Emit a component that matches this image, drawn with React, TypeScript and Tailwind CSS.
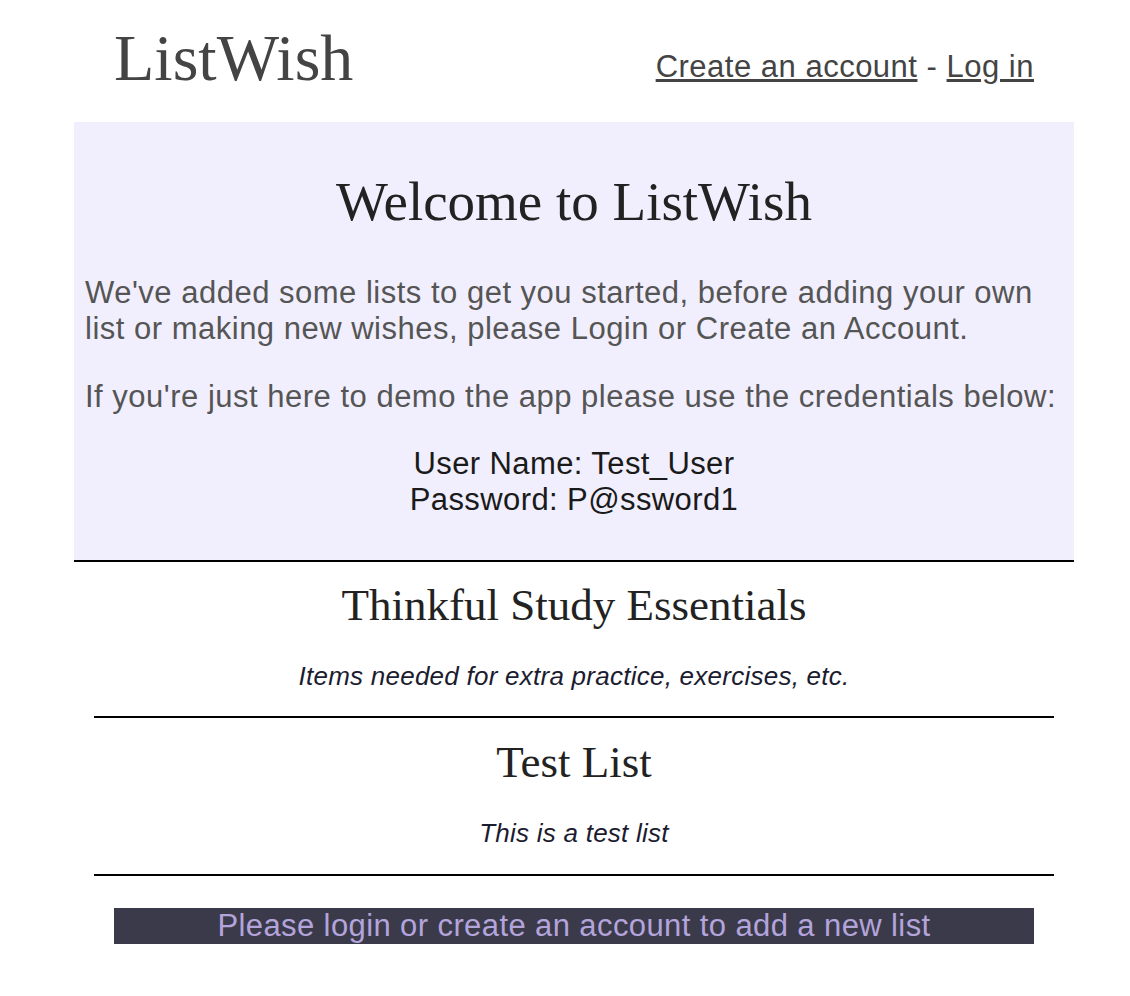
export default function App() {
  return (
    <div className="min-h-screen bg-white font-['Liberation_Sans',Arial,sans-serif]">
      <div className="ml-[74px] w-[1000px]">
        {/* Header */}
        <header className="flex h-[122px] items-start justify-between px-[40px]">
          <h1 className="mt-[20px] font-['Liberation_Serif',serif] text-[66px] leading-[76px] text-[#444]">
            ListWish
          </h1>
          <nav className="mt-[49px] text-[31px] leading-[36px] tracking-[0.5px] text-[#444]">
            <a href="#" className="underline">Create an account</a>
            <span> - </span>
            <a href="#" className="underline">Log in</a>
          </nav>
        </header>

        {/* Welcome panel */}
        <section className="border-b-2 border-black bg-[#f1effd] px-[11px] pt-[50px] pb-[42px]">
          <h2 className="text-center font-['Liberation_Serif',serif] text-[55px] leading-[60px] text-[#222]">
            Welcome to ListWish
          </h2>
          <p className="mt-[43px] text-[31px] leading-[36px] tracking-[0.5px] text-[#555]">
            We've added some lists to get you started, before adding your own list or making new wishes, please Login or Create an Account.
          </p>
          <p className="mt-[32px] text-[31px] leading-[36px] tracking-[0.5px] text-[#555]">
            If you're just here to demo the app please use the credentials below:
          </p>
          <div className="mt-[31px] text-center text-[31px] leading-[36px] tracking-[0.4px] text-[#1a1a1a]">
            <p>User Name: Test_User</p>
            <p>Password: P@ssword1</p>
          </div>
        </section>

        {/* Lists */}
        <div className="px-[20px]">
          <div className="h-[156px] border-b-2 border-black pt-[19px] text-center">
            <h3 className="font-['Liberation_Serif',serif] text-[45px] leading-[48px] text-[#222]">
              Thinkful Study Essentials
            </h3>
            <p className="mt-[33px] text-[26px] italic leading-[28px] tracking-[0.25px] text-[#1c1c30]">
              Items needed for extra practice, exercises, etc.
            </p>
          </div>
          <div className="h-[158px] border-b-2 border-black pt-[20px] text-center">
            <h3 className="font-['Liberation_Serif',serif] text-[45px] leading-[48px] text-[#222]">
              Test List
            </h3>
            <p className="mt-[33px] text-[26px] italic leading-[28px] tracking-[0.25px] text-[#1c1c30]">
              This is a test list
            </p>
          </div>
        </div>

        <div className="mx-[40px] mt-[32px] bg-[#3b3a4a] text-center text-[31px] leading-[36px] tracking-[0.4px] text-[#b3a4db]">
          Please login or create an account to add a new list
        </div>
      </div>
    </div>
  );
}
